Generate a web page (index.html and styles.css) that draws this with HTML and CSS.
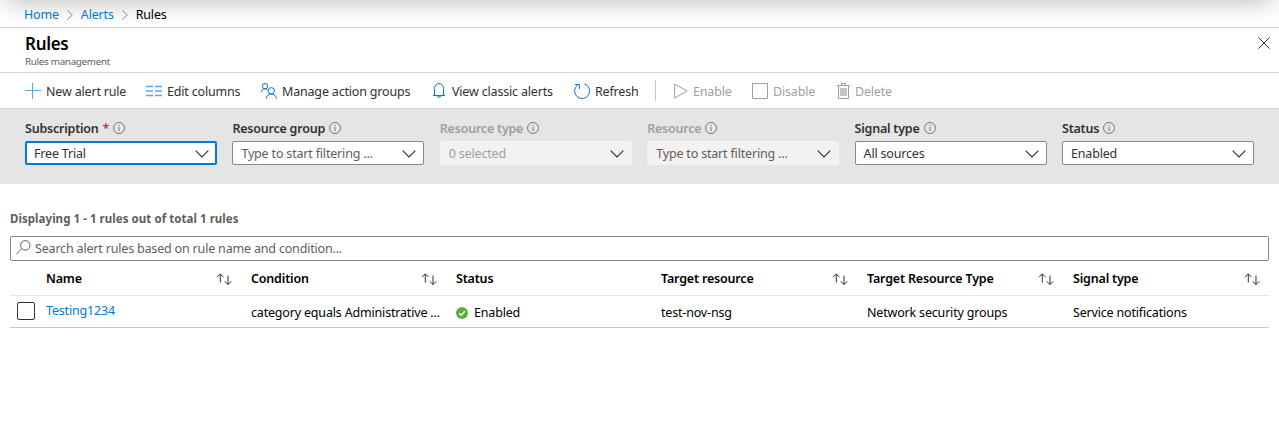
FILE: index.html
```html
<!DOCTYPE html>
<html lang="en">
<head>
<meta charset="utf-8">
<title>Rules</title>
<link rel="stylesheet" href="styles.css">
</head>
<body>
<svg class="defs" width="0" height="0">
  <symbol id="info" viewBox="0 0 12 12"><circle cx="6" cy="6" r="5.5"/><path d="M6 5v4M6 3v1"/></symbol>
  <symbol id="down" viewBox="0 0 14 8"><path d="M.7.7 7 7 13.300.7"/></symbol>
  <symbol id="crumb" viewBox="0 0 6 10"><path d="M.5.5 5.300 5 .5 9.500"/></symbol>
  <symbol id="sort" viewBox="0 0 16 13"><path d="M4.300 9.500V1M1 4.200 4.300.9 7.600 4.200M12 2.500V11.500M8.700 8.300 12 11.600 15.300 8.300"/></symbol>
</svg>
<nav class="crumbs">
  <a>Home</a><svg width="6" height="10"><use href="#crumb"/></svg><a>Alerts</a><svg width="6" height="10"><use href="#crumb"/></svg><span>Rules</span>
</nav>
<header class="head">
  <div><h1>Rules</h1><p>Rules management</p></div>
  <svg class="close" width="12" height="12" viewBox="0 0 12 12"><path d="M.4.4 11.600 11.600M11.600.4.4 11.600"/></svg>
</header>
<div class="toolbar">
  <div class="cmd c-new"><svg width="16" height="16" viewBox="0 0 16 16"><path class="light" d="M7.500 0V16M0 7.500H16"/></svg><span>New alert rule</span></div>
  <div class="cmd c-edit"><svg width="16" height="12" viewBox="0 0 16 12"><path class="light" d="M0 1.500H7M9 1.500H16M0 6H7M9 6H16M0 10.500H7M9 10.500H16"/></svg><span>Edit columns</span></div>
  <div class="cmd c-manage"><svg width="16" height="16" viewBox="0 0 16 16"><circle cx="4" cy="3.200" r="2.700"/><path d="M.5 9C.6 7 2 5.900 4 5.900c1 0 1.800.3 2.500.9M5.300 15.700C5.500 12.700 7.500 11 10.300 11s4.900 1.800 5.200 4.700"/><circle cx="10.300" cy="7.800" r="3.200"/></svg><span>Manage action groups</span></div>
  <div class="cmd c-view"><svg width="12" height="15" viewBox="0 0 12 15"><path d="M0 12.500H12M1.500 12.500V5.500a4.500 5 0 0 1 9 0V12.500M4.500 12.700a1.500 1.700 0 0 0 3 0"/></svg><span>View classic alerts</span></div>
  <div class="cmd c-refresh"><svg width="16" height="16" viewBox="0 0 16 16"><path d="M10.500.9A7.500 7.500 0 1 1 3.500 2.100M1 1.500H5.500V5.800"/></svg><span>Refresh</span></div>
  <div class="divider"></div>
  <div class="cmd off c-enable"><svg width="14" height="16" viewBox="0 0 14 16"><path d="M.6 1 13.200 8 .6 15z"/></svg><span>Enable</span></div>
  <div class="cmd off c-disable"><svg width="16" height="16" viewBox="0 0 16 16"><path d="M.5.5H15.500V15.500H.5z"/></svg><span>Disable</span></div>
  <div class="cmd off c-delete"><svg width="13" height="16" viewBox="0 0 13 16"><path d="M0 2.500H13M4.500 2.500V.5h4v2M1.500 2.500V15.500h10V2.500"/><path class="bin" d="M3 5H10V13H3z"/></svg><span>Delete</span></div>
</div>
<section class="filters">
  <div class="filter"><label><span>Subscription</span> <b>*</b><svg><use href="#info"/></svg></label><div class="select focus"><span>Free Trial</span><svg><use href="#down"/></svg></div></div>
  <div class="filter"><label><span>Resource group</span><svg><use href="#info"/></svg></label><div class="select hint"><span>Type to start filtering ...</span><svg><use href="#down"/></svg></div></div>
  <div class="filter disabled"><label><span>Resource type</span><svg><use href="#info"/></svg></label><div class="select"><span>0 selected</span><svg><use href="#down"/></svg></div></div>
  <div class="filter disabled"><label><span>Resource</span><svg><use href="#info"/></svg></label><div class="select hint"><span>Type to start filtering ...</span><svg><use href="#down"/></svg></div></div>
  <div class="filter"><label><span>Signal type</span><svg><use href="#info"/></svg></label><div class="select"><span>All sources</span><svg><use href="#down"/></svg></div></div>
  <div class="filter"><label><span>Status</span><svg><use href="#info"/></svg></label><div class="select"><span>Enabled</span><svg><use href="#down"/></svg></div></div>
</section>
<main class="content">
  <p class="count">Displaying 1 - 1 rules out of total 1 rules</p>
  <div class="search"><svg width="15" height="15" viewBox="0 0 15 15"><circle cx="9.300" cy="5.300" r="4.700"/><path d="M5.900 8.700.5 14.200"/></svg><span>Search alert rules based on rule name and condition...</span></div>
  <div class="row th">
    <i></i>
    <div><span>Name</span><svg><use href="#sort"/></svg></div>
    <div><span>Condition</span><svg><use href="#sort"/></svg></div>
    <div><span>Status</span></div>
    <div><span>Target resource</span><svg><use href="#sort"/></svg></div>
    <div><span>Target Resource Type</span><svg><use href="#sort"/></svg></div>
    <div><span>Signal type</span><svg><use href="#sort"/></svg></div>
  </div>
  <div class="row td">
    <i class="check"></i>
    <div class="name"><a>Testing1234</a></div>
    <div class="cond"><span>category equals Administrative ...</span></div>
    <div class="status"><svg class="ok" viewBox="0 0 12 12"><circle cx="6" cy="6" r="6"/><path d="M3 6.200 5.200 8.300 9 4"/></svg><span>Enabled</span></div>
    <div><span>test-nov-nsg</span></div>
    <div><span>Network security groups</span></div>
    <div><span>Service notifications</span></div>
  </div>
</main>
</body>
</html>
```
FILE: styles.css
```css
* { box-sizing: border-box; }
body { margin: 0; height: 428px; overflow: hidden; background: #fff; color: #000; font: 12.5px/18px "Noto Sans", "Open Sans", sans-serif; letter-spacing: -0.180px; white-space: nowrap; }
svg { fill: none; stroke: #323130; stroke-width: 1; flex: none; }
.defs { position: absolute; }
h1, p { margin: 0; }
a { color: #0078d4; }
.crumbs { position: relative; height: 28px; display: flex; align-items: center; padding: 2px 0 0 24px; border-bottom: 1px solid #d2d2d2; overflow: hidden; }
.crumbs::before { content: ""; position: absolute; top: -20px; left: 8px; right: 10px; height: 20px; box-shadow: 0 0 24px 2px rgba(0, 0, 0, .28); }
.crumbs > * { position: relative; }
.crumbs svg { margin: 0 8px; stroke: #888; }
.head { height: 45px; display: flex; justify-content: space-between; padding: 5px 9px 0 25px; border-bottom: 1px solid #d2d2d2; }
.head h1 { font-size: 17px; line-height: 22px; font-weight: 600; letter-spacing: -0.300px; }
.head p { font-size: 9.800px; line-height: 14px; color: #605e5c; letter-spacing: -0.280px; }
.close { margin-top: 4px; }
.toolbar { height: 36px; display: flex; align-items: center; padding-left: 25px; border-bottom: 1px solid #d2d2d2; color: #323130; }
.cmd { display: flex; align-items: center; gap: 5px; }
.cmd span { margin-top: 2px; }
.cmd svg { stroke: #0078d4; }
.cmd .light { stroke: #58a8e4; }
.c-edit .light { stroke-width: 1.300; }
.c-new { width: 121px; }
.c-edit { width: 115px; }
.c-manage { width: 172px; }
.c-view { width: 141px; gap: 7px; }
.c-refresh { width: 81px; }
.divider { width: 1px; height: 21px; background: #c8c8c8; margin-right: 18px; }
.off { color: #a19f9d; }
.cmd.off svg { stroke: #a19f9d; }
.cmd.off .bin { fill: #c8c6c4; stroke: none; }
.c-enable { width: 78px; }
.c-disable { width: 85px; }
.filters { height: 75px; background: #e5e5e5; padding: 11px 25px 0; display: grid; grid-template-columns: repeat(6, 1fr); column-gap: 15.400px; align-items: start; }
.filter label { height: 21px; display: flex; align-items: flex-start; gap: 4px; color: #323130; font-weight: 600; letter-spacing: -0.220px; }
.filter label b { color: #a4262c; font-weight: 400; }
.filter label svg { width: 12px; height: 12px; margin-top: 2px; stroke: #605e5c; stroke-width: .8; }
.select { height: 24px; border: 1px solid #8a8886; border-radius: 2px; background: #fff; padding: 0 7px 0 8px; display: flex; justify-content: space-between; align-items: center; color: #323130; }
.select span { margin-top: 2px; }
.select svg { width: 14px; height: 8px; margin-top: 1px; stroke-width: 1.200; }
.focus { border: 2px solid #0078d4; padding: 0 6px 0 7px; }
.hint { color: #605e5c; }
.disabled label { color: #a19f9d; }
.disabled .select { background: #f3f2f1; border-color: #f3f2f1; color: #a19f9d; }
.disabled .hint { color: #605e5c; }
.content { padding: 26px 10px 0; }
.count { color: #605e5c; font-weight: 700; font-size: 11.500px; letter-spacing: 0.050px; }
.search { height: 25px; margin-top: 8px; border: 1px solid #8a8886; border-radius: 2px; display: flex; align-items: center; gap: 4px; padding-left: 5px; color: #605e5c; }
.search svg { margin-bottom: 3px; stroke: #605e5c; }
.row { display: grid; grid-template-columns: 36px 205px 205px 205px 206px 206px 1fr; align-items: center; }
.row > div { display: flex; align-items: center; justify-content: space-between; padding-right: 19px; }
.row > div:last-child { padding-right: 9px; }
.th { height: 35px; border-bottom: 1px solid #e6e6e6; padding-top: 2px; font-weight: 600; }
.th svg { width: 16px; height: 13px; margin-top: 1px; }
.td { height: 32px; border-bottom: 1px solid #c8c8c8; padding-top: 2px; }
.check { width: 18px; height: 18px; border: 1px solid #323130; border-radius: 2px; margin: -3px 0 0 7px; }
.name { margin-top: -4px; }
.row > .cond { padding-right: 0; }
.row > .status { justify-content: flex-start; gap: 6px; }
.ok { width: 12px; height: 12px; fill: #57b03a; stroke: none; }
.ok path { fill: none; stroke: #fff; stroke-width: 1.300; }
```
